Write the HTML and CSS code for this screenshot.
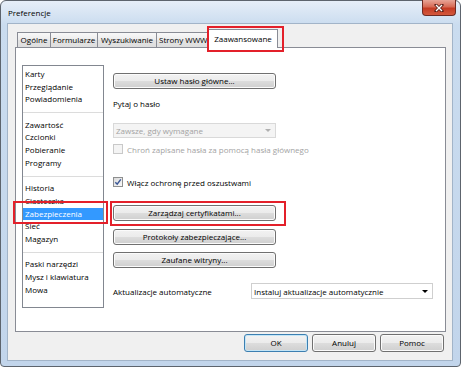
FILE: index.html
```html
<!DOCTYPE html>
<html lang="pl">
<head>
  <meta charset="UTF-8" />
  <meta name="viewport" content="width=device-width, initial-scale=1.0" />
  <title>Preferencje</title>
  <link rel="stylesheet" href="styles.css">
</head>
<body>
  <div class="window">
    <div class="titlebar">
      <span class="title">Preferencje</span>
      <div class="close">
        <svg width="10" height="8" viewBox="0 0 10 8">
          <path d="M2 1 L8 7 M8 1 L2 7" stroke="#5a2018" stroke-width="3" stroke-linecap="square" fill="none" />
          <path d="M2 1 L8 7 M8 1 L2 7" stroke="#fff" stroke-width="1.4" fill="none" />
        </svg>
      </div>
    </div>

    <div class="client">
      <div class="tabs">
        <div class="tab tab-general">Ogólne</div>
        <div class="tab tab-forms">Formularze</div>
        <div class="tab tab-search">Wyszukiwanie</div>
        <div class="tab tab-web">Strony WWW</div>
        <div class="tab active">Zaawansowane</div>
      </div>

      <div class="panel">
        <ul class="list">
          <li>Karty</li>
          <li>Przeglądanie</li>
          <li>Powiadomienia</li>
          <li class="sep"></li>
          <li>Zawartość</li>
          <li>Czcionki</li>
          <li>Pobieranie</li>
          <li>Programy</li>
          <li class="sep"></li>
          <li>Historia</li>
          <li>Ciasteczka</li>
          <li class="selected">Zabezpieczenia</li>
          <li>Sieć</li>
          <li>Magazyn</li>
          <li class="sep"></li>
          <li>Paski narzędzi</li>
          <li>Mysz i klawiatura</li>
          <li>Mowa</li>
        </ul>

        <div class="settings">
          <button class="btn btn-master">Ustaw hasło główne...</button>
          <div class="label-ask">Pytaj o hasło</div>
          <div class="select disabled"><span>Zawsze, gdy wymagane</span><i class="arrow"></i></div>
          <div class="check disabled"><span class="box"></span>Chroń zapisane hasła za pomocą hasła głównego</div>
          <div class="check phish">
            <span class="box">
              <svg width="8" height="8" viewBox="0 0 8 8"><path d="M1.3 4.2 L3.2 6.2 L6.8 1.4" stroke="#3b5796" stroke-width="1.5" fill="none" /></svg>
            </span>Włącz ochronę przed oszustwami
          </div>
          <button class="btn btn-certs">Zarządzaj certyfikatami...</button>
          <button class="btn btn-proto">Protokoły zabezpieczające...</button>
          <button class="btn btn-trusted">Zaufane witryny...</button>
          <div class="update-row">
            <span>Aktualizacje automatyczne</span>
            <div class="select"><span>Instaluj aktualizacje automatycznie</span><i class="arrow"></i></div>
          </div>
        </div>
      </div>

      <div class="dialog-buttons">
        <button class="btn dlg default">OK</button>
        <button class="btn dlg">Anuluj</button>
        <button class="btn dlg">Pomoc</button>
      </div>
    </div>

    <!-- red annotation frames -->
    <div class="mark mark-tab"></div>
    <div class="mark mark-list"></div>
    <div class="mark mark-certs"></div>
  </div>
</body>
</html>
```

FILE: styles.css
```css
body {
  margin: 0;
  background: #fff;
  font-family: "Open Sans", "Noto Sans", sans-serif;
  font-size: 8px;
  color: #000;
}
.window {
  position: relative;
  width: 461px;
  height: 367px;
  box-sizing: border-box;
  border: 1px solid #5d646d;
  border-radius: 6px 6px 4px 4px;
  background: linear-gradient(#e6eef8, #cadcef 24px, #c2d5eb);
  padding: 0 7px 5px 6px;
  display: flex;
  flex-direction: column;
}
/* Title bar */
.titlebar {
  display: flex;
  align-items: flex-start;
  height: 22px;
  margin: 0 -7px 0 -6px;
  padding-left: 7px;
}
.title {
  margin-top: 6px;
  line-height: 12px;
}
.close {
  margin-left: auto;
  margin-right: 4px;
  margin-top: -1px;
  width: 34px;
  height: 16px;
  box-sizing: border-box;
  border: 1px solid #6e2a22;
  border-top: none;
  border-radius: 0 0 4px 4px;
  background: linear-gradient(#e8a597, #d76a55 45%, #c43b24 55%, #d4583c);
  display: flex;
  align-items: center;
  justify-content: center;
}
/* Client area */
.client {
  flex: 1;
  border: 1px solid #a2b4c8;
  background: #f0f0f0;
  display: flex;
  flex-direction: column;
  padding-top: 5px;
}
.tabs {
  display: flex;
  align-items: flex-end;
  height: 19px;
  margin: 0 0 -1px 9px;
  position: relative;
  z-index: 1;
}
.tab {
  height: 16px;
  box-sizing: border-box;
  border: 1px solid #898c95;
  margin-right: -1px;
  background: linear-gradient(#f8f8f8, #ececec 50%, #e3e3e3 50%, #dedede);
  line-height: 14px;
  text-align: center;
  white-space: nowrap;
  overflow: hidden;
}
.tab-general { width: 34px; }
.tab-forms { width: 48px; }
.tab-search { width: 60px; }
.tab-web { width: 54px; text-align: left; padding-left: 2px; }
.tab.active {
  width: 70px;
  height: 19px;
  margin-left: -1px;
  border-bottom: none;
  background: #fff;
  line-height: 17px;
  position: relative;
  z-index: 2;
}
.panel {
  width: 431px;
  height: 285px;
  box-sizing: border-box;
  margin-left: 7px;
  border: 1px solid #898c95;
  background: #fff;
  display: flex;
  align-items: flex-start;
  padding: 17px 0 0 6px;
}
/* Category list */
.list {
  list-style: none;
  margin: 0;
  width: 82px;
  height: 243px;
  box-sizing: border-box;
  border: 1px solid #828790;
  padding: 2px 0 0;
}
.list li {
  line-height: 12.7px;
  height: 12.7px;
  padding-left: 2px;
  white-space: nowrap;
}
.list li.sep {
  background: linear-gradient(transparent 6px, #dcdcdc 6px, #dcdcdc 7px, transparent 7px);
}
.list li.selected {
  background: #3399ff;
  color: #fff;
}
/* Settings column */
.settings {
  margin-left: 9px;
  display: flex;
  flex-direction: column;
  align-items: flex-start;
}
.btn {
  width: 163px;
  height: 16px;
  box-sizing: border-box;
  padding: 0;
  border: 1px solid #707070;
  border-radius: 3px;
  background: linear-gradient(#f2f2f2, #ebebeb 50%, #dddddd 50%, #cfcfcf);
  box-shadow: inset 0 0 0 1px #fbfbfb;
  font: inherit;
  color: #000;
  line-height: 14px;
  text-align: center;
}
.btn-master { margin-top: 8px; }
.label-ask { margin-top: 9px; line-height: 12px; }
.select {
  height: 16px;
  box-sizing: border-box;
  border: 1px solid #cfcfcf;
  background: #fff;
  display: flex;
  align-items: center;
  justify-content: space-between;
  padding: 0 4px 0 2px;
  white-space: nowrap;
}
.select.disabled {
  width: 163px;
  height: 15px;
  margin-top: 13px;
  background: #f4f4f4;
  border-color: #d9d9d9;
  color: #a3a3a3;
}
.arrow {
  width: 0;
  height: 0;
  border-left: 3px solid transparent;
  border-right: 3px solid transparent;
  border-top: 3px solid #000;
}
.select.disabled .arrow { border-top-color: #b0b0b0; }
.check {
  display: flex;
  align-items: center;
  height: 12px;
  white-space: nowrap;
}
.check.disabled { margin-top: 5px; color: #a3a3a3; }
.check.phish { margin-top: 21px; }
.box {
  width: 10px;
  height: 10px;
  box-sizing: border-box;
  margin-right: 4px;
  border: 1px solid #8e8f8f;
  background: linear-gradient(135deg, #dadada, #fafafa);
  display: flex;
  align-items: center;
  justify-content: center;
}
.check.disabled .box {
  border-color: #c9c9c9;
  background: #f4f4f4;
}
.btn-certs { margin-top: 17px; }
.btn-proto { margin-top: 8px; }
.btn-trusted { margin-top: 7px; }
.update-row {
  margin-top: 15px;
  width: 320px;
  display: flex;
  align-items: center;
  justify-content: space-between;
}
.update-row .select { width: 182px; }
/* OK / Anuluj / Pomoc */
.dialog-buttons {
  display: flex;
  justify-content: flex-end;
  gap: 4px;
  margin-top: 2px;
  padding-right: 8px;
}
.btn.dlg {
  width: 64px;
  height: 18px;
  line-height: 16px;
}
.btn.default {
  border-color: #3c7fb1;
  box-shadow: inset 0 0 0 1px #c4e5f6;
}
/* Red annotation frames */
.mark {
  position: absolute;
  box-sizing: border-box;
  border: 2px solid #e3202a;
  pointer-events: none;
  z-index: 5;
}
.mark-tab { left: 206px; top: 25px; width: 77px; height: 26px; }
.mark-list { left: 12px; top: 200px; width: 95px; height: 23px; }
.mark-certs { left: 109px; top: 200px; width: 176px; height: 25px; }
```
